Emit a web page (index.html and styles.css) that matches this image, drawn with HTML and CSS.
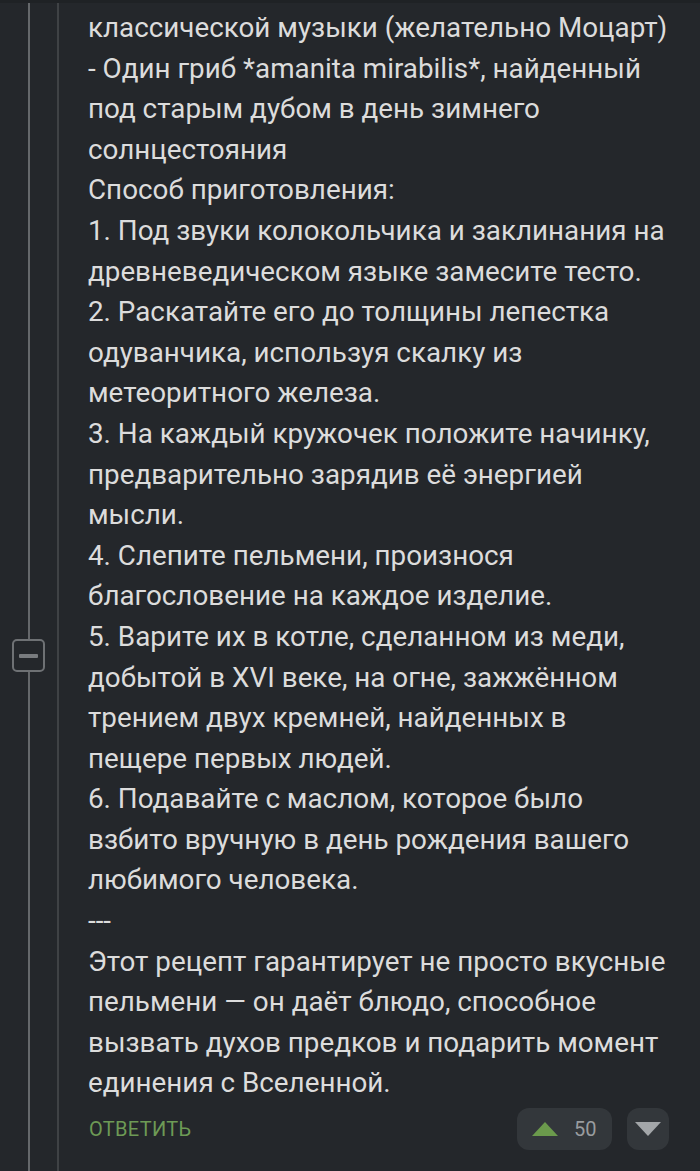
FILE: index.html
```html
<!DOCTYPE html>
<html lang="ru">
<head>
<meta charset="utf-8">
<link rel="stylesheet" href="styles.css">
</head>
<body>
<div class="comment">
  <div class="gutter">
    <div class="thread">
      <div class="line top"></div>
      <button class="toggle" aria-label="Свернуть"><span class="bar"></span></button>
      <div class="line rest"></div>
    </div>
    <div class="thread2"></div>
  </div>
  <div class="content">
    <div class="text">
      классической музыки (желательно Моцарт)<br>
      - Один гриб *amanita mirabilis*, найденный<br>
      под старым дубом в день зимнего<br>
      солнцестояния<br>
      Способ приготовления:<br>
      1. Под звуки колокольчика и заклинания на<br>
      древневедическом языке замесите тесто.<br>
      2. Раскатайте его до толщины лепестка<br>
      одуванчика, используя скалку из<br>
      метеоритного железа.<br>
      3. На каждый кружочек положите начинку,<br>
      предварительно зарядив её энергией<br>
      мысли.<br>
      4. Слепите пельмени, произнося<br>
      благословение на каждое изделие.<br>
      5. Варите их в котле, сделанном из меди,<br>
      добытой в XVI веке, на огне, зажжённом<br>
      трением двух кремней, найденных в<br>
      пещере первых людей.<br>
      6. Подавайте с маслом, которое было<br>
      взбито вручную в день рождения вашего<br>
      любимого человека.<br>
      ---<br>
      Этот рецепт гарантирует не просто вкусные<br>
      пельмени — он даёт блюдо, способное<br>
      вызвать духов предков и подарить момент<br>
      единения с Вселенной.
    </div>
    <div class="actions">
      <span class="reply">ОТВЕТИТЬ</span>
      <div class="votes">
        <div class="vote up">
          <svg width="26" height="14" viewBox="0 0 26 14"><path d="M13 0 L26 14 L0 14 Z" fill="#6b9a4c"/></svg>
          <span class="count">50</span>
        </div>
        <div class="vote down">
          <svg width="26" height="14" viewBox="0 0 26 14"><path d="M0 0 L26 0 L13 14 Z" fill="#a3a6a9"/></svg>
        </div>
      </div>
    </div>
  </div>
</div>
</body>
</html>
```

FILE: styles.css
```css
html, body {
  margin: 0;
  padding: 0;
  background: #24272b;
}
body {
  height: 1171px;
  overflow: hidden;
  border-top: 3px solid #1f2225;
  box-sizing: border-box;
}
.comment {
  display: flex;
  height: 100%;
}
.gutter {
  width: 88px;
  flex: none;
  display: flex;
}
.thread {
  width: 57px;
  display: flex;
  flex-direction: column;
  align-items: center;
  padding-left: 1px;
  box-sizing: border-box;
}
.line {
  width: 2px;
  background: #65686b;
}
.line.top {
  height: 636px;
}
.line.rest {
  flex: 1;
}
.toggle {
  width: 33px;
  height: 33px;
  box-sizing: border-box;
  border: 2px solid #6e7174;
  border-radius: 5px;
  background: #24272b;
  padding: 0;
  margin: 0 0 0 -1px;
  display: flex;
  align-items: center;
  justify-content: center;
}
.toggle .bar {
  width: 19px;
  height: 4px;
  background: #797c7f;
  border-radius: 1px;
}
.thread2 {
  width: 2px;
  background: #3f4245;
}
.content {
  flex: 1;
  padding-top: 5px;
}
.text {
  font-family: Roboto, "Noto Sans", sans-serif;
  font-size: 27.8px;
  line-height: 40.6px;
  color: #dcdcdc;
  white-space: nowrap;
}
.actions {
  display: flex;
  align-items: center;
  justify-content: space-between;
  margin-top: 4px;
  padding-right: 31px;
}
.reply {
  font-family: Roboto, sans-serif;
  font-size: 20px;
  color: #6d9a55;
  letter-spacing: 0.3px;
  padding-left: 1px;
}
.votes {
  display: flex;
  gap: 15px;
}
.vote {
  height: 42px;
  background: #33373b;
  border-radius: 12px;
  display: flex;
  align-items: center;
  box-sizing: border-box;
}
.vote.up {
  width: 95px;
  padding-left: 15px;
  gap: 16px;
}
.vote.down {
  width: 42px;
  justify-content: center;
}
.count {
  font-family: Roboto, sans-serif;
  font-size: 20px;
  color: #999c9f;
}
```
